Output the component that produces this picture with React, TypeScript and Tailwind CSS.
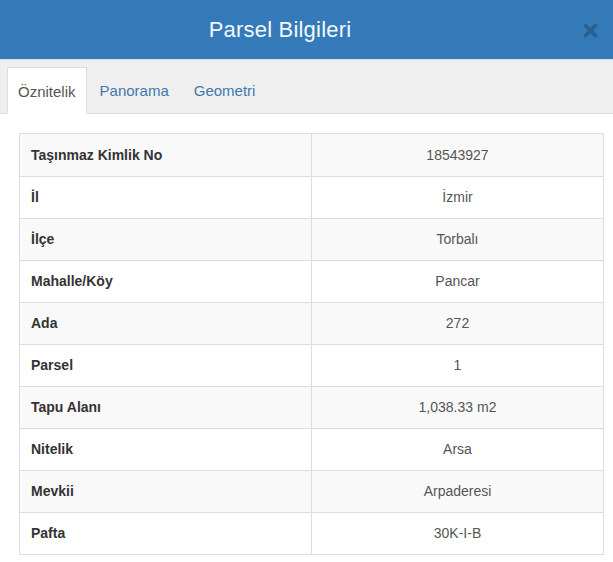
import React from "react";

const rows: [string, string][] = [
  ["Taşınmaz Kimlik No", "18543927"],
  ["İl", "İzmir"],
  ["İlçe", "Torbalı"],
  ["Mahalle/Köy", "Pancar"],
  ["Ada", "272"],
  ["Parsel", "1"],
  ["Tapu Alanı", "1,038.33 m2"],
  ["Nitelik", "Arsa"],
  ["Mevkii", "Arpaderesi"],
  ["Pafta", "30K-I-B"],
];

export default function App() {
  return (
    <div
      className="w-[613px] h-[562px] bg-white overflow-hidden"
      style={{ fontFamily: '"Liberation Sans", Arial, sans-serif' }}
    >
      <div className="h-[60px] bg-[#347ab8] flex items-center relative border-b border-[#cfe3f3]">
        <div className="flex-1 text-center pr-[53px] text-[22px] text-[#f2f8ff] tracking-[0.2px]">
          Parsel Bilgileri
        </div>
        <svg
          className="absolute left-[583px] top-[23px]"
          width="15"
          height="15"
          viewBox="0 0 15 15"
        >
          <path
            d="M2.5 2.5 L12.5 12.5 M12.5 2.5 L2.5 12.5"
            stroke="#2a5f8f"
            strokeWidth="3.6"
            strokeLinecap="round"
          />
        </svg>
      </div>
      <div className="h-[54px] bg-[#efefef] border-b border-[#dddddd] flex items-end pl-[7px]">
        <div className="h-[47px] -mb-px bg-white border border-[#dddddd] border-b-white px-[10px] pt-[3px] mr-[2px] flex items-center text-[15px] text-[#555555]">
          Öznitelik
        </div>
        <div className="h-[47px] px-[11px] pt-[3px] mr-[2px] flex items-center text-[15px] text-[#3f79ad]">
          Panorama
        </div>
        <div className="h-[47px] px-[12px] pt-[3px] flex items-center text-[15px] text-[#3f79ad]">
          Geometri
        </div>
      </div>
      <div className="pt-[19px] pl-[19px] pr-[10px]">
        <div className="border border-[#dddddd] w-[585px]">
          {rows.map(([k, v], i) => (
            <div
              key={k}
              className={`flex h-[42px] ${i > 0 ? "border-t border-[#dddddd]" : ""} ${
                i % 2 === 0 ? "bg-[#f9f9f9]" : "bg-white"
              }`}
            >
              <div className="w-[292px] border-r border-[#dddddd] pl-[11px] flex items-center text-[14px] font-bold text-[#333333]">
                {k}
              </div>
              <div className="flex-1 flex items-center justify-center text-[14px] text-[#555555]">
                {v}
              </div>
            </div>
          ))}
        </div>
      </div>
    </div>
  );
}
